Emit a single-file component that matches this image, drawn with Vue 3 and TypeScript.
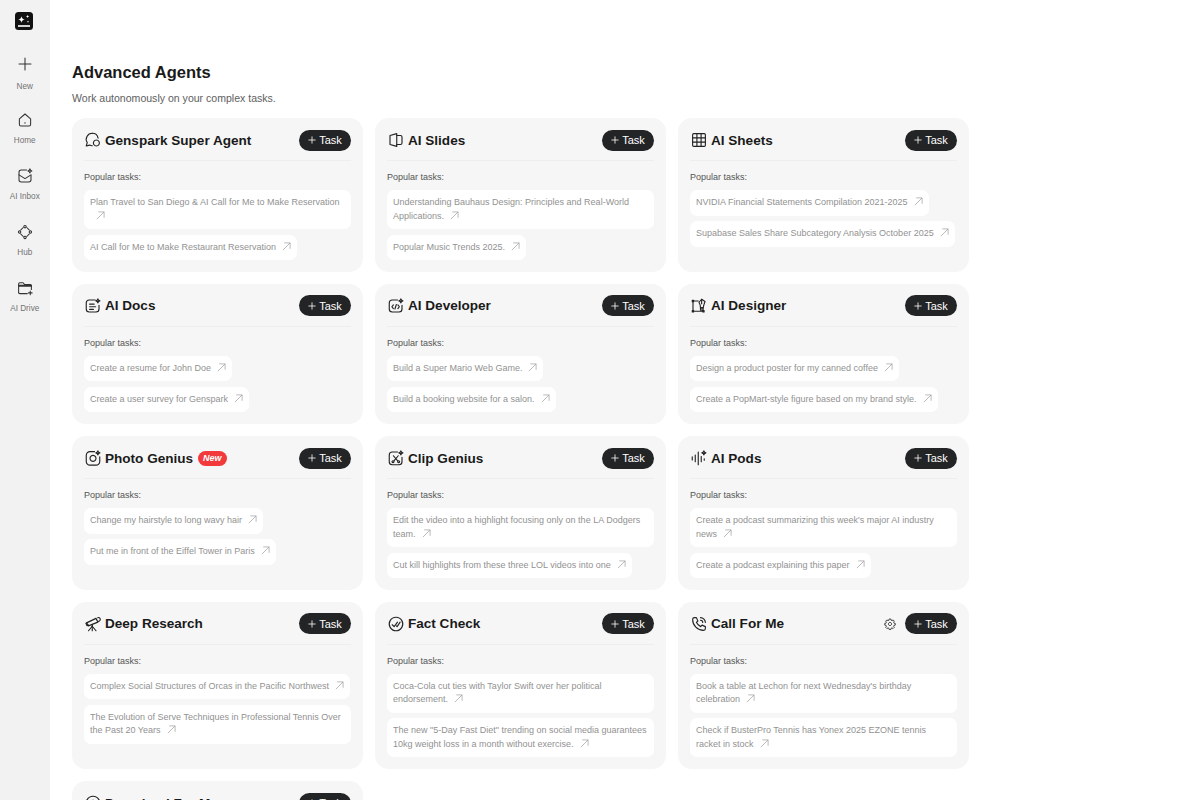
<script setup lang="ts">
interface Agent {
  name: string
  icon: string[]
  tasks: string[]
  badge?: boolean
  gear?: boolean
}

const sparkle = 'M18.5 2.5c.3 1.7 1 2.4 2.7 2.7-1.7.3-2.4 1-2.7 2.7-.3-1.7-1-2.4-2.7-2.7 1.7-.3 2.4-1 2.7-2.7z'

const nav = [
  { label: 'New', cls: 'nav-new', icon: ['M12 4v16', 'M4 12h16'] },
  { label: 'Home', cls: '', icon: ['M4.5 10.5 12 4l7.5 6.5V18a2 2 0 0 1-2 2h-11a2 2 0 0 1-2-2z', 'M12 15.5v.8'] },
  { label: 'AI Inbox', cls: '', icon: ['M14 4H7a3 3 0 0 0-3 3v10a3 3 0 0 0 3 3h10a3 3 0 0 0 3-3v-6', 'M4 10.5l8 5 8-5', sparkle] },
  { label: 'Hub', cls: '', icon: ['M12 3.2a1.6 1.6 0 1 0 .01 0z', 'M12 17.6a1.6 1.6 0 1 0 .01 0z', 'M4.8 10.4a1.6 1.6 0 1 0 .01 0z', 'M19.2 10.4a1.6 1.6 0 1 0 .01 0z', 'M6.2 9.4 9.6 6', 'M14.4 6l3.4 3.4', 'M6.2 14.6 9.6 18', 'M14.4 18l3.4-3.4'] },
  { label: 'AI Drive', cls: '', icon: ['M3.5 18V6.5A1.5 1.5 0 0 1 5 5h4.5l2 2.5H19a1.5 1.5 0 0 1 1.5 1.5v5', 'M3.5 9.5h17', 'M3.5 8.5h17', 'M3.5 18A1.5 1.5 0 0 0 5 19.5h10', 'M19 16v5', 'M16.5 18.5h5'] },
]

const agents: Agent[] = [
  { name: 'Genspark Super Agent', icon: ['M11 3a8 8 0 0 1 7.8 6.5', 'M11 3a8 8 0 0 0-6.7 12.4L3 20l4.5-1.2a8 8 0 0 0 3.5.8', 'M16.5 12a4 4 0 1 0 .01 0z'], tasks: ['Plan Travel to San Diego & AI Call for Me to Make Reservation', 'AI Call for Me to Make Restaurant Reservation'] },
  { name: 'AI Slides', icon: ['M4 6 13 3.5v17L4 18z', 'M13 6h5a2 2 0 0 1 2 2v8a2 2 0 0 1-2 2h-5'], tasks: ['Understanding Bauhaus Design: Principles and Real-World Applications.', 'Popular Music Trends 2025.'] },
  { name: 'AI Sheets', icon: ['M5 3.5h14A1.5 1.5 0 0 1 20.5 5v14a1.5 1.5 0 0 1-1.5 1.5H5A1.5 1.5 0 0 1 3.5 19V5A1.5 1.5 0 0 1 5 3.5z', 'M3.5 9.2h17', 'M3.5 14.8h17', 'M9.2 3.5v17', 'M14.8 3.5v17'], tasks: ['NVIDIA Financial Statements Compilation 2021-2025', 'Supabase Sales Share Subcategory Analysis October 2025'] },
  { name: 'AI Docs', icon: ['M15 4H7a4 4 0 0 0-4 4v8a4 4 0 0 0 4 4h9a4 4 0 0 0 4-4v-5', 'M7.5 9.5h6', 'M7.5 13h8', 'M7.5 16.5h5', sparkle], tasks: ['Create a resume for John Doe', 'Create a user survey for Genspark'] },
  { name: 'AI Developer', icon: ['M14 4H7a4 4 0 0 0-4 4v8a4 4 0 0 0 4 4h9a4 4 0 0 0 4-4v-5', 'M8.5 10.5 6.5 13l2 2.5', 'M14.5 10.5l2 2.5-2 2.5', 'M12.5 10l-2 6', sparkle], tasks: ['Build a Super Mario Web Game.', 'Build a booking website for a salon.'] },
  { name: 'AI Designer', icon: ['M3 4.5h1.8v1.8H3z', 'M3 18.2h1.8V20H3z', 'M17 18.2h1.8V20H17z', 'M4 6.3v11.9', 'M4.8 19h12.2', 'M4.8 5.4H11', 'M15.5 3l4.5 3-1.5 4.5-1 4h-3.5l-.5-4L12 7z', 'M15.5 3v6', 'M14 14.5h3.5v3H14z'], tasks: ['Design a product poster for my canned coffee', 'Create a PopMart-style figure based on my brand style.'] },
  { name: 'Photo Genius', badge: true, icon: ['M14 3.5H8a5 5 0 0 0-5 5v8a5 5 0 0 0 5 5h8a5 5 0 0 0 5-5v-6', 'M12 8.5a4 4 0 1 0 .01 0z', sparkle], tasks: ['Change my hairstyle to long wavy hair', 'Put me in front of the Eiffel Tower in Paris'] },
  { name: 'Clip Genius', icon: ['M14 4H7a4 4 0 0 0-4 4v9a4 4 0 0 0 4 4h9a4 4 0 0 0 4-4v-6', 'M8.5 9l5.5 6.5', 'M15 9l-5.5 6.5', 'M8 15.6a1.3 1.3 0 1 0 .01 0z', 'M15.5 15.6a1.3 1.3 0 1 0 .01 0z', sparkle], tasks: ['Edit the video into a highlight focusing only on the LA Dodgers team.', 'Cut kill highlights from these three LOL videos into one'] },
  { name: 'AI Pods', icon: ['M3 10.5v4', 'M7 8v9', 'M11 4v17', 'M15 10v7', 'M19 13v2', sparkle], tasks: ["Create a podcast summarizing this week's major AI industry news", 'Create a podcast explaining this paper'] },
  { name: 'Deep Research', icon: ['M3.5 10.5 16 4.5l2.5 5-12.5 5z', 'M3.5 10.5l-1 .6 1.6 3.2 1.9-.8', 'M18.3 3.6a2.5 2.5 0 0 1 2.3 4.4l-1.6.7', 'M11 12.5V15', 'M11 15l-5 6', 'M11 15l5 6', 'M11 15v6'], tasks: ['Complex Social Structures of Orcas in the Pacific Northwest', 'The Evolution of Serve Techniques in Professional Tennis Over the Past 20 Years'] },
  { name: 'Fact Check', icon: ['M12 3a9 9 0 1 0 .01 0z', 'M7 13l2.5 2.5L14 9.5', 'M12.5 14.5l1 1L17.5 9.5'], tasks: ['Coca-Cola cut ties with Taylor Swift over her political endorsement.', 'The new "5-Day Fast Diet" trending on social media guarantees 10kg weight loss in a month without exercise.'] },
  { name: 'Call For Me', gear: true, icon: ['M6 3.5h2.5l2 4.5-2 1.8a12 12 0 0 0 5.7 5.7l1.8-2 4.5 2v2.5a2.5 2.5 0 0 1-2.5 2.5C10 20.5 3.5 14 3.5 6A2.5 2.5 0 0 1 6 3.5z', 'M14 3.5a6.5 6.5 0 0 1 6.5 6.5', 'M14 7a3 3 0 0 1 3 3'], tasks: ["Book a table at Lechon for next Wednesday's birthday celebration", 'Check if BusterPro Tennis has Yonex 2025 EZONE tennis racket in stock'] },
  { name: 'Download For Me', icon: ['M12 3a9 9 0 1 0 .01 0z', 'M12 8v8', 'M8.5 12.5 12 16l3.5-3.5'], tasks: ['Download the latest annual report', 'Download these product images'] },
]

const gearPaths = [
  'M12 8.8a3.2 3.2 0 1 0 .01 0z',
  'M10.3 2h3.4l.5 2.5 1.8.8 2.2-1.4 2.4 2.4-1.4 2.2.8 1.8 2.5.5v3.4l-2.5.5-.8 1.8 1.4 2.2-2.4 2.4-2.2-1.4-1.8.8-.5 2.5h-3.4l-.5-2.5-1.8-.8-2.2 1.4-2.4-2.4 1.4-2.2-.8-1.8-2.5-.5v-3.4l2.5-.5.8-1.8-1.4-2.2 2.4-2.4 2.2 1.4 1.8-.8z',
]
</script>

<template>
  <div class="page">
    <aside class="sidebar">
      <div class="logo">
        <svg viewBox="0 0 18 18" width="18" height="18">
          <rect width="18" height="18" rx="3.5" fill="#111" />
          <path d="M6.5 4.2c.4 2 1.2 2.9 3.3 3.3-2.1.4-2.9 1.3-3.3 3.3-.4-2-1.2-2.9-3.3-3.3 2.1-.4 2.9-1.3 3.3-3.3zM12.6 2.8c.2 1.1.6 1.5 1.7 1.7-1.1.2-1.5.6-1.7 1.7-.2-1.1-.6-1.5-1.7-1.7 1.1-.2 1.5-.6 1.7-1.7zM13 8.6c.1.8.4 1.1 1.2 1.2-.8.1-1.1.4-1.2 1.2-.1-.8-.4-1.1-1.2-1.2.8-.1 1.1-.4 1.2-1.2z" fill="#fff" />
          <rect x="3" y="13.2" width="12" height="1.6" fill="#fff" />
        </svg>
      </div>
      <nav class="nav">
        <div v-for="item in nav" :key="item.label" class="nav-item" :class="item.cls">
          <svg class="nav-icon" viewBox="0 0 24 24" width="18" height="18">
            <path v-for="d in item.icon" :key="d" :d="d" />
          </svg>
          <span class="nav-label">{{ item.label }}</span>
        </div>
      </nav>
    </aside>

    <main class="main">
      <h1 class="title">Advanced Agents</h1>
      <p class="subtitle">Work autonomously on your complex tasks.</p>
      <section class="grid">
        <article v-for="agent in agents" :key="agent.name" class="card">
          <header class="card-head">
            <svg class="agent-icon" viewBox="0 0 24 24" width="18" height="18">
              <path v-for="d in agent.icon" :key="d" :d="d" />
            </svg>
            <h2 class="agent-name">{{ agent.name }}</h2>
            <span v-if="agent.badge" class="badge">New</span>
            <svg v-if="agent.gear" class="gear" viewBox="0 0 24 24" width="12" height="12">
              <path v-for="d in gearPaths" :key="d" :d="d" />
            </svg>
            <button class="task-btn" type="button">
              <svg viewBox="0 0 10 10" width="8" height="8"><path d="M5 .5v9M.5 5h9" /></svg>
              <span>Task</span>
            </button>
          </header>
          <div class="popular">Popular tasks:</div>
          <div class="tasks">
            <div v-for="task in agent.tasks" :key="task" class="task">
              {{ task }}<svg class="arrow" viewBox="0 0 10 10" width="9" height="9"><path d="M1 9 9 1M2.5 1H9v6.5" /></svg>
            </div>
          </div>
        </article>
      </section>
    </main>
  </div>
</template>

<style>
html, body {
  margin: 0;
  height: 100%;
  overflow: hidden;
  background: #fff;
}
</style>

<style scoped>
.page {
  display: flex;
  height: 800px;
  overflow: hidden;
  font-family: "Liberation Sans", Arial, sans-serif;
  color: #1a1a1a;
}
.sidebar {
  flex: 0 0 49.5px;
  background: #f2f2f2;
  display: flex;
  flex-direction: column;
  align-items: center;
}
.logo {
  height: 18px;
  margin: 12px 1.5px 25px 0;
}
.logo svg { display: block; }
.nav {
  display: flex;
  flex-direction: column;
  align-items: center;
}
.nav-item {
  height: 56px;
  display: flex;
  flex-direction: column;
  align-items: center;
}
.nav-icon {
  fill: none;
  stroke: #333;
  stroke-width: 1.4;
  stroke-linecap: round;
  stroke-linejoin: round;
}
.nav-label {
  margin-top: 6px;
  font-size: 8.2px;
  line-height: 12px;
  color: #737373;
  white-space: nowrap;
}
.nav-new .nav-label { margin-top: 8px; }
.main {
  flex: 1;
  min-width: 0;
  padding: 62px 0 0 22.5px;
}
.title {
  margin: 0;
  font-size: 16.5px;
  line-height: 21px;
  font-weight: 700;
  color: #1a1a1a;
}
.subtitle {
  margin: 8px 0 0;
  font-size: 10.55px;
  line-height: 14px;
  color: #606060;
}
.grid {
  margin-top: 13px;
  display: grid;
  grid-template-columns: repeat(3, 291px);
  gap: 12.3px 12px;
  align-items: start;
}
.card {
  background: #f6f6f6;
  border-radius: 14px;
  padding: 12px 12px 11.5px;
  box-sizing: border-box;
  height: 100%;
}
.card-head {
  display: flex;
  align-items: center;
  height: 31px;
  padding-bottom: 10px;
  box-sizing: border-box;
  border-bottom: 1px solid #eeeeee;
}
.agent-icon {
  flex: none;
  margin-right: 3px;
  fill: none;
  stroke: #222;
  stroke-width: 1.5;
  stroke-linecap: round;
  stroke-linejoin: round;
}
.agent-name {
  margin: 0;
  font-size: 13.55px;
  line-height: 21px;
  font-weight: 700;
  color: #1a1a1a;
  white-space: nowrap;
}
.badge {
  margin-left: 5px;
  padding: 0 5px;
  height: 15px;
  line-height: 15px;
  border-radius: 8px;
  background: #f23a3c;
  color: #fff;
  font-size: 9px;
  font-weight: 700;
  font-style: italic;
}
.gear {
  margin-left: auto;
  margin-right: 9px;
  fill: none;
  stroke: #333;
  stroke-width: 1.8;
  stroke-linejoin: round;
}
.task-btn {
  margin-left: auto;
  flex: none;
  width: 52px;
  height: 21px;
  padding: 0;
  border: 0;
  border-radius: 11px;
  background: #232425;
  color: #fff;
  font-family: inherit;
  font-size: 11px;
  display: flex;
  align-items: center;
  justify-content: center;
  gap: 3px;
}
.gear + .task-btn { margin-left: 0; }
.task-btn svg {
  fill: none;
  stroke: #fff;
  stroke-width: 1;
}
.popular {
  margin-top: 10px;
  font-size: 9px;
  line-height: 12px;
  color: #555;
}
.tasks {
  margin-top: 7px;
  display: flex;
  flex-direction: column;
  align-items: flex-start;
  gap: 5.5px;
}
.task {
  background: #fff;
  border-radius: 7px;
  padding: 6px;
  font-size: 9px;
  line-height: 13.5px;
  color: #929292;
  box-sizing: border-box;
}
.arrow {
  margin-left: 6px;
  vertical-align: -1px;
  fill: none;
  stroke: #a0a0a0;
  stroke-width: 0.8;
}
</style>
